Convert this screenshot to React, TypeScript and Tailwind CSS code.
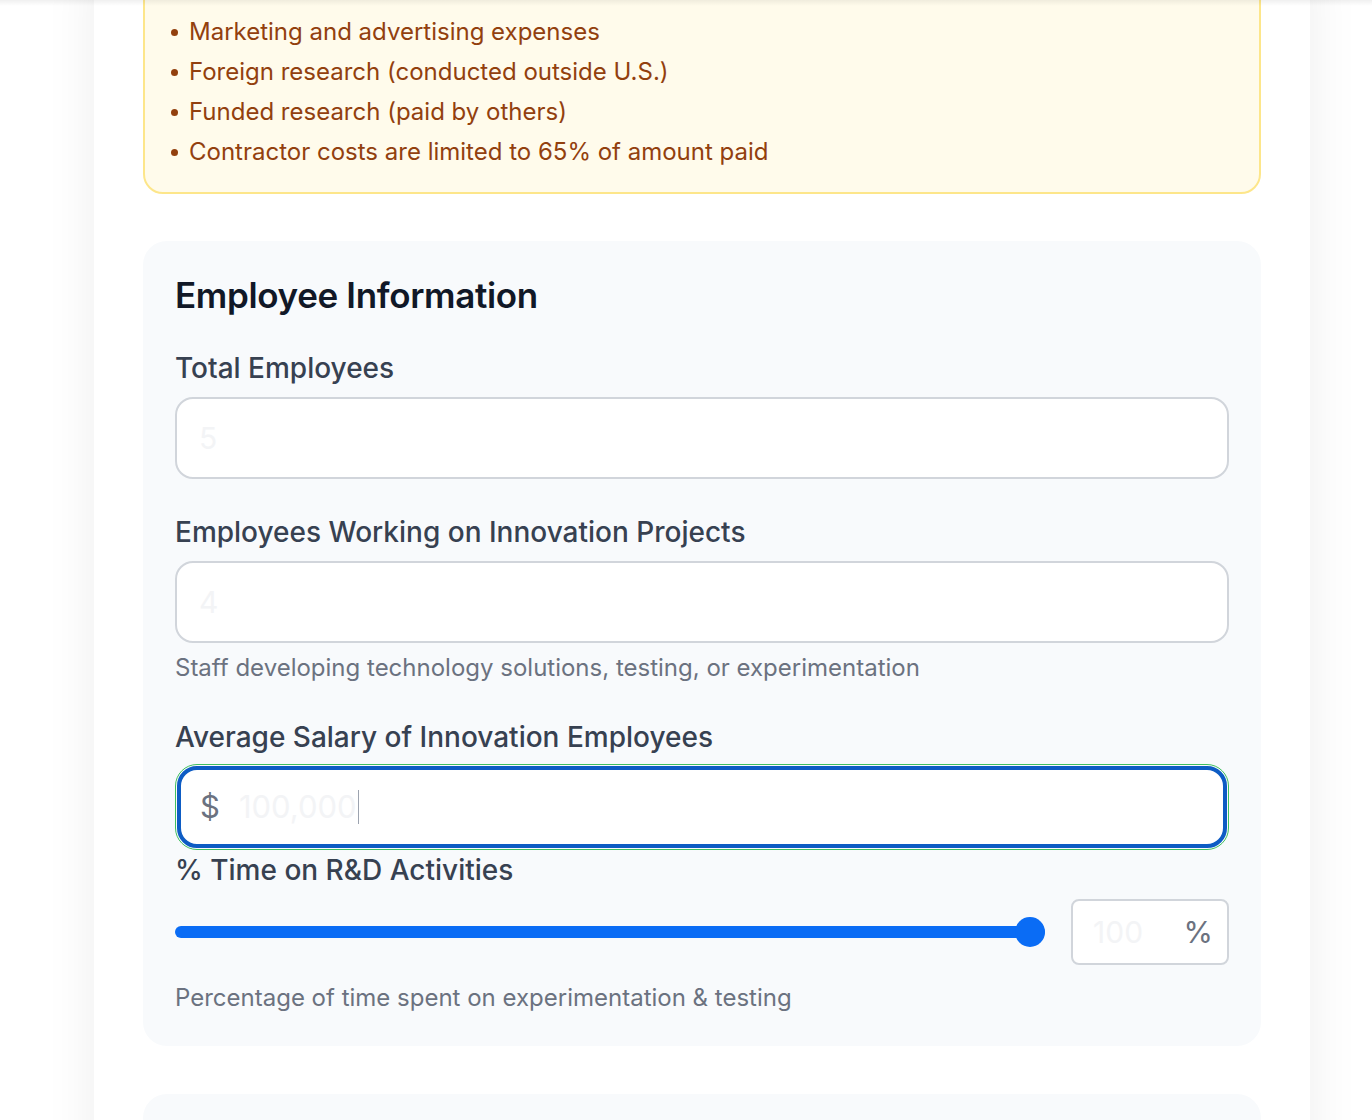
import React from 'react';

const font = { fontFamily: 'Inter, "Noto Sans", sans-serif' };

function Field({
  label,
  placeholder,
  help,
}: {
  label: string;
  placeholder: string;
  help?: string;
}) {
  return (
    <div className="mb-[33px]">
      <label className="block text-[28px] leading-[40px] font-medium text-[#374151] mb-[9px]">{label}</label>
      <input
        placeholder={placeholder}
        className="block w-full h-[82px] rounded-[18px] border-2 border-[#d1d5db] bg-white px-[22px] text-[30px] placeholder:text-[#f3f4f6] outline-none"
      />
      {help && <p className="mt-[9px] text-[24px] leading-[32px] text-[#6b7280]">{help}</p>}
    </div>
  );
}

export default function App() {
  return (
    <div className="relative min-h-screen bg-white overflow-hidden" style={font}>
      <div className="absolute top-0 left-0 right-0 h-[6px] bg-gradient-to-b from-black/[0.06] to-transparent z-10" />
      <div className="ml-[94px] w-[1216px] -mt-[40px] bg-white shadow-[0_0_50px_rgba(0,0,0,0.07)] px-[49px] pb-[200px]">
        <div className="rounded-[20px] border-2 border-[#fde68a] bg-[#fffbeb] pl-[26px] pr-6 pt-[50px] pb-[20px] text-[#92400e]">
          <ul className="text-[24px] leading-[40px]">
            {[
              'Marketing and advertising expenses',
              'Foreign research (conducted outside U.S.)',
              'Funded research (paid by others)',
              'Contractor costs are limited to 65% of amount paid',
            ].map((t) => (
              <li key={t} className="flex items-center gap-[11px]">
                <span className="w-[7px] h-[7px] rounded-full bg-[#92400e] shrink-0" />
                {t}
              </li>
            ))}
          </ul>
        </div>

        <section className="mt-[47px] rounded-[24px] bg-[#f8fafc] px-[32px] pt-[32px] pb-[32px]">
          <h2 className="text-[35px] leading-[44px] font-semibold text-[#111827] tracking-[-0.01em] mb-[31px]">
            Employee Information
          </h2>
          <Field label="Total Employees" placeholder="5" />
          <Field
            label="Employees Working on Innovation Projects"
            placeholder="4"
            help="Staff developing technology solutions, testing, or experimentation"
          />
          <div>
            <label className="block text-[28px] leading-[40px] font-medium text-[#374151] mb-[7px]">
              Average Salary of Innovation Employees
            </label>
            <div className="rounded-[22px] border-[1.5px] border-[#3fbf5f] p-[1px]">
              <div className="flex items-center h-[82px] rounded-[20px] border-[4px] border-[#0d5cc4] bg-white px-[19px]">
                <span className="text-[31px] text-[#6b7280] mr-[19px]">$</span>
                <span className="text-[31px] text-[#f3f4f6]">100,000</span>
                <span className="w-[1px] h-[34px] bg-[#9ca3af] ml-[1px]" />
              </div>
            </div>
          </div>
          <label className="block text-[28px] leading-[40px] font-medium text-[#374151]">
            % Time on R&amp;D Activities
          </label>
          <div className="flex items-center gap-[26px] mt-[9px]">
            <div className="relative flex-1 h-[30px] flex items-center">
              <div className="w-full h-[12px] rounded-full bg-[#0a6cf5]" />
              <div className="absolute right-0 top-0 w-[30px] h-[30px] rounded-full bg-[#0a6cf5]" />
            </div>
            <div className="w-[158px] h-[66px] rounded-[8px] border-2 border-[#d1d5db] bg-white flex items-center justify-between pl-[20px] pr-[14px]">
              <span className="text-[30px] text-[#f3f4f6]">100</span>
              <span className="text-[30px] text-[#6b7280]">%</span>
            </div>
          </div>
          <p className="mt-[17px] text-[24px] leading-[32px] text-[#6b7280]">
            Percentage of time spent on experimentation &amp; testing
          </p>
        </section>

        <section className="mt-[48px] rounded-[24px] bg-[#f8fafc] h-[300px]" />
      </div>
    </div>
  );
}
